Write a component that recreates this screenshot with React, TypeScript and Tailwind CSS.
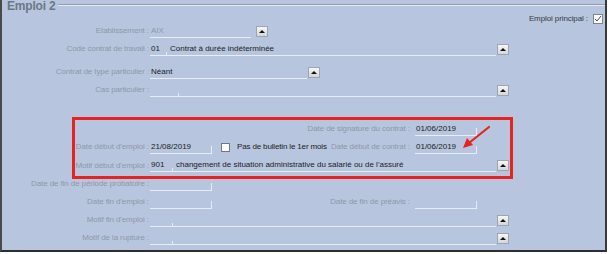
import React from 'react';

const LABEL = 'text-[8px] leading-[10px] text-[#8e97a8] tracking-[-0.1px] whitespace-nowrap';
const VALUE = 'text-[8px] leading-[12px] text-[#1b1b1b] whitespace-nowrap';

function Btn() {
  return (
    <span className="flex h-[11px] w-[12px] shrink-0 items-center justify-center border border-[#9ca5b1] bg-gradient-to-b from-[#f6f6f6] to-[#d4d6da]">
      <span className="h-0 w-0 border-x-[3px] border-b-[3px] border-x-transparent border-b-[#111]" />
    </span>
  );
}

function Field({
  w,
  value,
  muted,
  tick,
}: {
  w: number;
  value?: string;
  muted?: boolean;
  tick?: boolean;
}) {
  return (
    <div className="flex h-[13px] shrink-0 items-end" style={{ width: w }}>
      <div className="flex h-full flex-1 items-center border-b border-[#e7edf6] pl-[1px]">
        <span className={muted ? VALUE + ' text-[#8f98a8]' : VALUE}>{value}</span>
      </div>
      {tick && <span className="h-[8px] w-px bg-[#e7edf6]" />}
    </div>
  );
}

function CodeField({ code, desc, split }: { code?: string; desc?: string; split: number }) {
  return (
    <div className="flex h-[13px] w-[346px] items-end">
      <div className="flex h-full items-center border-b border-[#e7edf6] pl-[1px]" style={{ width: split }}>
        <span className={VALUE}>{code}</span>
      </div>
      <span className="h-[4px] w-px bg-[#e7edf6]" />
      <div className="flex h-full flex-1 items-center border-b border-[#e7edf6] pl-[3px]">
        <span className={VALUE}>{desc}</span>
      </div>
    </div>
  );
}

function Label({ text, w = 147 }: { text: string; w?: number }) {
  return (
    <div className={'shrink-0 text-right ' + LABEL} style={{ width: w }}>
      {text}
    </div>
  );
}

function Row({ children, h = 18 }: { children?: React.ReactNode; h?: number }) {
  return (
    <div className="flex items-center gap-[1px]" style={{ height: h }}>
      {children}
    </div>
  );
}

export default function App() {
  return (
    <div className="h-[254px] w-[611px] bg-white font-['Liberation_Sans',Arial,sans-serif]">
      <div className="relative h-[252px] w-[607px] border-x-2 border-b-2 border-l-[#4a4a4a] border-r-[#3a3a3a] border-b-[#2e2e2e] bg-[#b7c6de]">
        {/* group box caption */}
        <div className="flex h-[12px] items-start">
          <span className="pl-[5px] text-[12px] font-bold leading-[12px] tracking-[-0.2px] text-[#6c7686]">
            Emploi 2
          </span>
          <div className="ml-[3px] mt-[4px] flex-1 border-t border-[#8f9aad] shadow-[0_1px_0_#e6ebf3]" />
        </div>

        <div className="-mb-[4px] flex h-[14px] items-center justify-end gap-[5px] pr-[2px]">
          <span className="text-[8px] leading-[10px] tracking-[-0.1px] text-[#333a45]">Emploi principal :</span>
          <span className="relative flex h-[10px] w-[10px] items-center justify-center border border-[#7d8591] bg-white">
            <svg width="8" height="8" viewBox="0 0 8 8">
              <path d="M1 4 L3 6 L7 1" fill="none" stroke="#4a4f57" strokeWidth="1" />
            </svg>
          </span>
        </div>

        <Row>
          <Label text="Etablissement :" />
          <Field w={101} value="AIX" muted />
          <span className="w-[3px]" />
          <Btn />
        </Row>
        <Row>
          <Label text="Code contrat de travail :" />
          <CodeField code="01" desc="Contrat à durée indéterminée" split={16} />
          <Btn />
        </Row>
        <div className="h-[5px]" />
        <Row>
          <Label text="Contrat de type particulier :" />
          <Field w={157} value="Néant" />
          <Btn />
        </Row>
        <Row>
          <Label text="Cas particulier :" />
          <CodeField split={28} />
          <Btn />
        </Row>
        <div className="h-[21px]" />
        <Row>
          <div className="w-[173px] shrink-0" />
          <Label text="Date de signature du contrat :" w={234} />
          <span className="w-[3px]" />
          <Field w={62} value="01/06/2019" tick />
        </Row>
        <Row>
          <Label text="Date début d'emploi :" />
          <Field w={62} value="21/08/2019" tick />
          <span className="w-[7px]" />
          <span className="h-[9px] w-[9px] shrink-0 border border-[#6f7782] bg-white" />
          <span className="w-[5px]" />
          <span className="w-[92px] shrink-0 whitespace-nowrap text-[8px] leading-[12px] tracking-[-0.15px] text-[#1b1b1b]">
            Pas de bulletin le 1er mois
          </span>
          <Label text="Date début de contrat :" w={80} />
          <span className="w-[3px]" />
          <Field w={62} value="01/06/2019" tick />
        </Row>
        <Row h={19}>
          <Label text="Motif début d'emploi :" />
          <CodeField code="901" desc="changement de situation administrative du salarié ou de l'assuré" split={22} />
          <Btn />
        </Row>
        <Row>
          <Label text="Date de fin de période probatoire :" />
          <Field w={62} tick />
        </Row>
        <Row>
          <Label text="Date fin d'emploi :" />
          <Field w={62} tick />
          <Label text="Date de fin de préavis :" w={197} />
          <span className="w-[3px]" />
          <Field w={62} tick />
        </Row>
        <Row>
          <Label text="Motif fin d'emploi :" />
          <CodeField split={22} />
          <Btn />
        </Row>
        <Row>
          <Label text="Motif de la rupture :" />
          <CodeField split={22} />
          <Btn />
        </Row>

        {/* annotation overlays */}
        <div className="pointer-events-none absolute left-[70px] top-[117px] h-[62px] w-[441px] border-[3px] border-[#e5231f]" />
        <svg className="pointer-events-none absolute left-[455px] top-[122px]" width="40" height="32" viewBox="0 0 40 32">
          <path d="M32 5 L12 21" stroke="#e5231f" strokeWidth="2.2" strokeLinecap="round" />
          <path d="M6 26 L10 16 L16 23 Z" fill="#e5231f" />
        </svg>
      </div>
    </div>
  );
}
